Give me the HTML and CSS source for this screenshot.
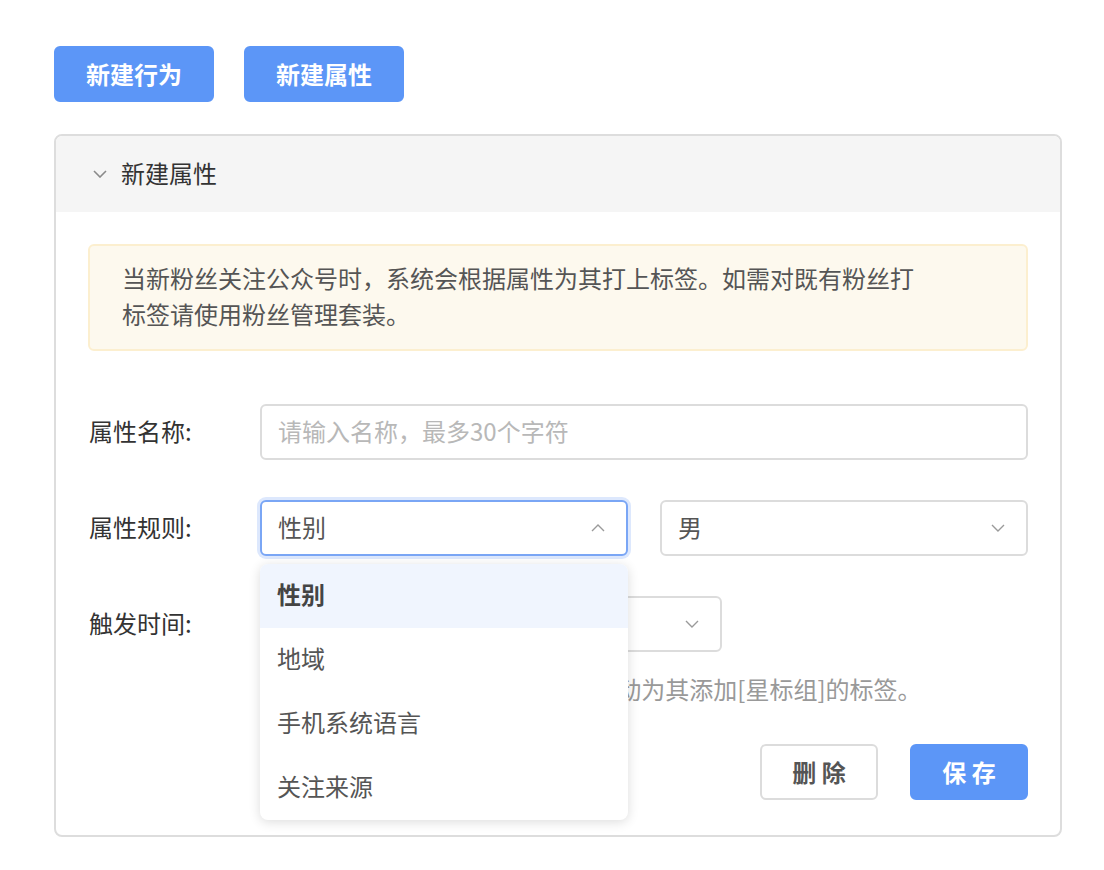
FILE: index.html
```html
<!DOCTYPE html>
<html lang="zh-CN">
<head>
<meta charset="utf-8">
<title>新建属性</title>
<link rel="stylesheet" href="styles.css">
</head>
<body>
<div class="page">
  <div class="toolbar">
    <button class="btn btn-primary btn-top">新建行为</button>
    <button class="btn btn-primary btn-top">新建属性</button>
  </div>

  <section class="card">
    <header class="card-head">
      <svg class="head-chevron" width="14" height="8" viewBox="0 0 14 8"><path d="M1 1 L7 7 L13 1" fill="none" stroke="#8a8a8a" stroke-width="1.6"/></svg>
      <span class="card-title">新建属性</span>
    </header>
    <div class="card-body">
      <div class="alert">
        <p class="alert-text">当新粉丝关注公众号时，系统会根据属性为其打上标签。如需对既有粉丝打<br>标签请使用粉丝管理套装。</p>
      </div>

      <div class="form">
        <div class="row">
          <label class="label">属性名称:</label>
          <div class="field">
            <div class="input"><span class="placeholder">请输入名称，最多30个字符</span></div>
          </div>
        </div>

        <div class="row">
          <label class="label">属性规则:</label>
          <div class="field split">
            <div class="select-wrap">
              <div class="select focused">
                <span class="value">性别</span>
                <svg class="arrow" width="14" height="8" viewBox="0 0 14 8"><path d="M1 7 L7 1 L13 7" fill="none" stroke="#9a9a9a" stroke-width="1.4"/></svg>
              </div>
              <ul class="dropdown">
                <li class="option selected">性别</li>
                <li class="option">地域</li>
                <li class="option">手机系统语言</li>
                <li class="option">关注来源</li>
              </ul>
            </div>
            <div class="select">
              <span class="value">男</span>
              <svg class="arrow" width="14" height="8" viewBox="0 0 14 8"><path d="M1 1 L7 7 L13 1" fill="none" stroke="#9a9a9a" stroke-width="1.4"/></svg>
            </div>
          </div>
        </div>

        <div class="row">
          <label class="label">触发时间:</label>
          <div class="field">
            <div class="select select-time">
              <span class="value"></span>
              <svg class="arrow" width="14" height="8" viewBox="0 0 14 8"><path d="M1 1 L7 7 L13 1" fill="none" stroke="#9a9a9a" stroke-width="1.4"/></svg>
            </div>
          </div>
        </div>

        <p class="hint">粉丝关注公众号3天后，系统会自动为其添加[星标组]的标签。</p>

        <div class="actions">
          <button class="btn btn-default">删 除</button>
          <button class="btn btn-primary">保 存</button>
        </div>
      </div>
    </div>
  </section>
</div>
</body>
</html>
```

FILE: styles.css
```css
* { box-sizing: border-box; }

html, body {
  margin: 0;
  padding: 0;
  background: #ffffff;
}

body {
  font-family: "Noto Sans CJK SC", "Noto Sans", "Liberation Sans", sans-serif;
  font-size: 24px;
  color: #333333;
}

.page {
  padding: 46px 42px 0 54px;
}

.toolbar {
  display: flex;
  gap: 30px;
}

.btn {
  font-family: inherit;
  border-radius: 6px;
  height: 56px;
  width: 118px;
  font-size: 24px;
  font-weight: 700;
  cursor: pointer;
  padding: 0;
  line-height: 1;
}

.btn-primary {
  background: #5c96f7;
  border: 2px solid #5c96f7;
  color: #ffffff;
}

.btn-top {
  width: 160px;
}

.btn-default {
  background: #ffffff;
  border: 2px solid #dcdcdc;
  color: #555555;
}

.card {
  margin-top: 32px;
  width: 1008px;
  border: 2px solid #dddddd;
  border-radius: 8px;
}

.card-head {
  height: 76px;
  background: #f5f5f5;
  border-radius: 6px 6px 0 0;
  display: flex;
  align-items: center;
  padding-left: 37px;
  gap: 14px;
}

.head-chevron {
  display: block;
}

.card-title {
  font-size: 24px;
  color: #333333;
  margin-top: -3px;
}

.card-body {
  padding: 32px 32px 35px 32px;
}

.alert {
  background: #fdf9ee;
  border: 2px solid #fcefcf;
  border-radius: 6px;
  padding: 14px 32px 17px 32px;
}

.alert-text {
  margin: 0;
  line-height: 36px;
  color: #555555;
}

.form {
  margin-top: 53px;
}

.row {
  display: flex;
  align-items: center;
  margin-bottom: 40px;
}

.row:nth-child(3) {
  margin-bottom: 20px;
}

.label {
  width: 172px;
  flex: none;
  color: #333333;
  padding-left: 1px;
  margin-top: -4px;
}

.field {
  flex: 1;
}

.split {
  display: grid;
  grid-template-columns: 1fr 1fr;
  gap: 32px;
}

.input,
.select {
  height: 56px;
  border: 2px solid #dcdcdc;
  border-radius: 6px;
  background: #ffffff;
  display: flex;
  align-items: center;
  padding: 0 16px;
}

.input > span,
.select .value {
  margin-top: -3px;
}

.placeholder {
  color: #b8b8b8;
}

.select {
  justify-content: space-between;
}

.select .value {
  color: #555555;
}

.select .arrow {
  display: block;
  margin-right: 5px;
}

.select.focused {
  border-color: #7aa6f5;
  box-shadow: 0 0 0 3px #dde8fd;
}

.select-wrap {
  position: relative;
  z-index: 5;
}

.select-time {
  width: 462px;
}

.dropdown {
  position: absolute;
  top: calc(100% + 8px);
  left: 0;
  width: 100%;
  margin: 0;
  padding: 0;
  list-style: none;
  background: #ffffff;
  border-radius: 8px;
  box-shadow: 0 2px 12px rgba(0, 0, 0, 0.14);
  overflow: hidden;
}

.option {
  height: 64px;
  line-height: 60px;
  padding-left: 17px;
  color: #555555;
}

.option.selected {
  background: #f0f5fe;
  font-weight: 700;
  color: #444444;
}

.hint {
  margin: 0 0 36px 172px;
  padding-left: 8px;
  line-height: 34px;
  padding-bottom: 2px;
  color: #999999;
}

.actions {
  display: flex;
  justify-content: flex-end;
  gap: 32px;
}
```
